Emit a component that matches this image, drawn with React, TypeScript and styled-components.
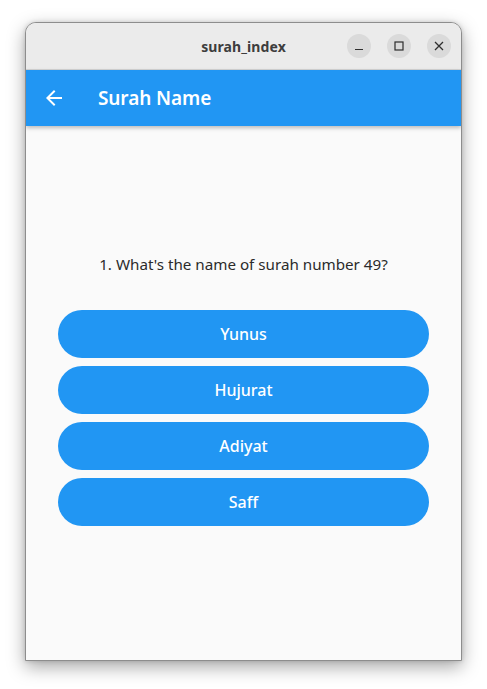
import React from "react";
import styled, { createGlobalStyle } from "styled-components";

const Global = createGlobalStyle`
  html, body { margin: 0; padding: 0; background: #ffffff; }
  body { font-family: "Noto Sans", "Open Sans", sans-serif; }
  #root { width: 487px; height: 689px; }
`;

const Desktop = styled.div`
  width: 487px;
  height: 689px;
  box-sizing: border-box;
  padding: 22px 25px 28px 25px;
  display: flex;
`;

const Window = styled.div`
  flex: 1;
  display: flex;
  flex-direction: column;
  border: 1px solid #8d8d8d;
  border-radius: 11px 11px 0 0;
  overflow: hidden;
  background: #fafafa;
  box-shadow: 0 6px 18px rgba(0, 0, 0, 0.35), 0 0 4px rgba(0, 0, 0, 0.15);
`;

const TitleBar = styled.div`
  height: 46px;
  flex: none;
  background: #ebebeb;
  border-bottom: 1px solid #d2d2d2;
  position: relative;
  display: flex;
  align-items: center;
  justify-content: center;
`;

const Title = styled.div`
  font-family: "Noto Sans", sans-serif;
  font-weight: 700;
  font-size: 14px;
  color: #3d3d3d;
  letter-spacing: 0.1px;
`;

const Controls = styled.div`
  position: absolute;
  right: 10px;
  top: 11px;
  display: flex;
  gap: 16px;
`;

const CtrlButton = styled.div`
  width: 24px;
  height: 24px;
  border-radius: 50%;
  background: #dadada;
  display: flex;
  align-items: center;
  justify-content: center;
`;

const AppBar = styled.div`
  height: 56px;
  flex: none;
  background: #2196f3;
  display: flex;
  align-items: center;
  padding-left: 16px;
  box-shadow: 0 2px 4px rgba(0, 0, 0, 0.25);
  position: relative;
  z-index: 1;
`;

const BackBtn = styled.div`
  width: 24px;
  height: 24px;
  display: flex;
  align-items: center;
  justify-content: center;
`;

const AppTitle = styled.div`
  margin-left: 32px;
  color: #ffffff;
  font-family: "Noto Sans", sans-serif;
  font-weight: 600;
  font-size: 19px;
  letter-spacing: -0.1px;
`;

const Body = styled.div`
  flex: 1;
  display: flex;
  flex-direction: column;
  justify-content: center;
  padding: 0 32px 6px 32px;
`;

const Question = styled.div`
  text-align: center;
  font-family: "Noto Sans", sans-serif;
  font-size: 15.2px;
  color: #2b2b2b;
  margin-bottom: 36px;
`;

const Options = styled.div`
  display: flex;
  flex-direction: column;
  gap: 8px;
`;

const Option = styled.button`
  height: 48px;
  border: none;
  border-radius: 24px;
  background: #2196f3;
  color: #ffffff;
  font-family: "Noto Sans", sans-serif;
  font-size: 16px;
  font-weight: 500;
  cursor: pointer;
  padding: 0;
`;

const options = ["Yunus", "Hujurat", "Adiyat", "Saff"];

export default function App() {
  return (
    <>
      <Global />
      <Desktop>
        <Window>
          <TitleBar>
            <Title>surah_index</Title>
            <Controls>
              <CtrlButton>
                <svg width="10" height="10" viewBox="0 0 10 10">
                  <path d="M1 8.5h8" stroke="#2e2e2e" strokeWidth="1.2" />
                </svg>
              </CtrlButton>
              <CtrlButton>
                <svg width="10" height="10" viewBox="0 0 10 10">
                  <rect x="1" y="1" width="8" height="8" fill="none" stroke="#2e2e2e" strokeWidth="1.2" />
                </svg>
              </CtrlButton>
              <CtrlButton>
                <svg width="10" height="10" viewBox="0 0 10 10">
                  <path d="M1 1L9 9M9 1L1 9" stroke="#2e2e2e" strokeWidth="1.3" />
                </svg>
              </CtrlButton>
            </Controls>
          </TitleBar>
          <AppBar>
            <BackBtn>
              <svg width="24" height="24" viewBox="0 0 24 24">
                <path fill="#ffffff" d="M20 11H7.83l5.59-5.59L12 4l-8 8 8 8 1.41-1.41L7.83 13H20v-2z" />
              </svg>
            </BackBtn>
            <AppTitle>Surah Name</AppTitle>
          </AppBar>
          <Body>
            <Question>1. What's the name of surah number 49?</Question>
            <Options>
              {options.map((o) => (
                <Option key={o}>{o}</Option>
              ))}
            </Options>
          </Body>
        </Window>
      </Desktop>
    </>
  );
}
